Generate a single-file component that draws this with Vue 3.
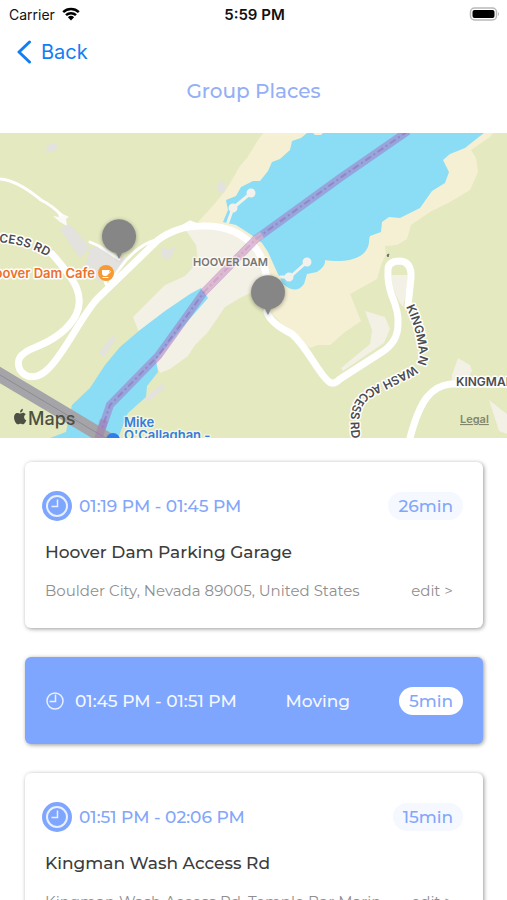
<script setup>
import { ref } from 'vue'

const stops = ref([
  {
    id: 1,
    moving: false,
    time: '01:19 PM - 01:45 PM',
    duration: '26min',
    name: 'Hoover Dam Parking Garage',
    address: 'Boulder City, Nevada 89005, United States'
  },
  { id: 2, moving: true, time: '01:45 PM - 01:51 PM', duration: '5min' },
  {
    id: 3,
    moving: false,
    time: '01:51 PM - 02:06 PM',
    duration: '15min',
    name: 'Kingman Wash Access Rd',
    address: 'Kingman Wash Access Rd, Temple Bar Marin...'
  }
])

const pins = [
  { x: 119, y: 236 },
  { x: 268, y: 292 }
]
</script>
<template>
  <div class="screen">
    <div class="status-bar">
      <div class="carrier">
        <span>Carrier</span>
        <svg class="wifi" viewBox="0 0 18 14">
          <path d="M1.2 5.2a11.3 11.3 0 0 1 15.6 0" />
          <path d="M4 8.2a7.2 7.2 0 0 1 10 0" />
          <path class="wifi-dot" d="M5.9 10.2a4.5 4.5 0 0 1 6.2 0L9 13.5z" />
        </svg>
      </div>
      <span class="clock">5:59 PM</span>
      <svg class="battery" viewBox="0 0 31 14">
        <rect x="1.5" y="1" width="26" height="12" rx="4" fill="#fff" stroke="#b9b9b9" stroke-width="1.5" />
        <rect x="3.5" y="3" width="22" height="8" rx="2" />
        <path d="M29 5q2 2 0 4z" fill="#b5b5b5" />
      </svg>
    </div>
    <header class="header">
      <button class="back-button">
        <svg class="chevron" viewBox="0 0 14 24"><path d="M12.5 2L2 12l10.5 10" /></svg>
        Back
      </button>
      <h1 class="title">Group Places</h1>
    </header>

    <svg class="map" viewBox="0 133 507 305" preserveAspectRatio="xMidYMid slice">
      <rect y="133" width="507" height="305" fill="#e4e9c0" />
      <!-- shore -->
      <path
        class="sand"
        d="M263 133L258 140 247 158 240 166 226 190 211 208 198 222 220 232 250 250 262 275 268 310 290 332 310 348 318 345 330 345 345 332 361 321 350 294 377 279 381 265 386 254 385 246 397 245 407 239 411 225 430 212 450 202 470 190 478 172 476 158 471 150 490 137 493 133z"
      />
      <path
        class="rock"
        d="M185 229L230 225 252 238 266 256 272 285 268 292 252 292 240 298 225 307 208 332 195 345 188 356 170 369 160 373 150 350 138 330 133 317 142 308 165 285 185 276 198 262 196 245z"
      />
      <!-- water -->
      <path
        class="water"
        d="M307 133L301 138 292 141 290 150 280 159 272 162 268 171 260 181 253 181 241 187 236 196 226 200 228 210 223 222 236 225 250 234 262 243 268 252 277 272 283 284Q296 295 304 284L307 274 317 272Q326 266 325 260C336 262 355 262 364 253 371 245 368 241 370 236L381 232 382 222 389 217 400 218 420 208 432 191 445 183 449 172 443 160 450 154 465 148 475 140 484 133z"
      />
      <path
        class="water"
        d="M201 288L208 298 180 330 156 360 158 372 147 386 146 397 128 413 118 438 50 438 66 432 72 405 90 388 105 365 120 347 140 330 165 311 190 294z"
      />
      <path class="sand" d="M313 133L323 133 321 135 315 135z" />
      <!-- lots and buildings -->
      <g fill="#e4e2df">
        <path d="M53 216L59 217 57 210 63 214 69 217 66 219 67 226 60 222z" fill="#fbfaf8" />
        <path d="M60 229L69 224 90 247 80 258z" />
        <path d="M90 249L100 245 112 257 128 258 117 270 99 283 86 264z" />
        <path d="M47 146l5-3 6 2-3 7-9-1zM217 185l4-4 4 3v7l-4 2-3-2zM161 247l8 3 8-4-5 8-3 5-7-2z" />
        <path d="M99 353l13-17 4 2-12 19zM145 398l18-15 2 4-17 15z" />
        <path d="M391 275q2 20 12 32l7-32z" class="rock" />
        <path d="M365 311L385 317 390 329 384 343 343 371 341 368 370 344 372 330z" class="rock" />
        <path d="M452 375l6-17 12 7 2 6-8 12h-12zM489 400l18 14v20l-8-3z" class="rock" />
      </g>
      <!-- roads -->
      <g class="road thin">
        <path d="M0 179Q17 180 41 200 53 206 61 215" />
        <path d="M90 242L99 246 119 259M106 288L120 268Q138 243 160 239L190 222 200 226M102 271l4 13" />
      </g>
      <g class="road">
        <path
          d="M52 254C76 281 85 296 76 315 67 332 51 341 36 347 18 354 16 361 20 370 28 381 40 377 48 369 65 353 80 318 97 299L158 240Q177 226 202 226C231 225 247 237 257 250 266 263 269 286 268 304"
        />
        <path d="M267 312Q270 323 292 334C307 347 317 371 328 381Q333 386 340 379L382 352Q398 342 398 324 399 313 392 296 387 282 388 270 388 261 400 261 412 262 411 278L408 306" />
        <path d="M410 438C420 400 431 386 451 384H507" />
      </g>
      <path d="M387 255l2-1-1 3z" stroke="#777" />
      <!-- piers -->
      <g class="pier">
        <path d="M228 222l5-14 18-15M280 277l10 0 17-15" />
        <circle cx="251" cy="193" r="3" />
        <circle cx="233" cy="208" r="3" />
        <circle cx="289" cy="277" r="3" />
        <circle cx="307" cy="262" r="3" />
      </g>
      <!-- state line -->
      <path class="border-line" d="M408 131L340 178 256 239 204 292 158 356 110 405 98 440" />
      <path class="border-dash" d="M408 131L340 178 256 239 204 292 158 356 110 405 98 440" />
      <path d="M262 235L256 239 204 292" fill="none" stroke="#f3c4cd" stroke-width="7" stroke-opacity=".5" />
      <!-- bridge -->
      <path d="M-5 372L114 443" stroke="#a5a4a9" stroke-width="14" />
      <path d="M-5 372L114 443" stroke="#8d8c92" stroke-width="1" />
      <path d="M104 420L98 440" stroke="#a279ae" stroke-width="8" stroke-opacity=".5" />

      <path id="access-path" d="M-10 242Q30 242 58 264" fill="none" />
      <path id="kingman-path" d="M406 307Q415 325 419 350C421 361 417 364 408 369L380 383C356 394 344 404 354 450" fill="none" />
      <g class="road-label">
        <text><textPath href="#access-path">CCESS RD</textPath></text>
        <text><textPath href="#kingman-path">KINGMAN WASH ACCESS RD</textPath></text>
        <text x="456" y="386">KINGMAN</text>
      </g>
      <text class="dam-label" x="193" y="266">HOOVER DAM</text>
      <text class="cafe-label" x="95" y="278" text-anchor="end">Hoover Dam Cafe</text>
      <circle cx="106" cy="273" r="8" fill="#f79a32" />
      <path d="M102 270h7v3q-1 3-3 3h-1q-3 0-3-3z" fill="#fff" />
      <path d="M109 270.5q3 .5 0 3M102.5 277.5h6" fill="none" stroke="#fff" />
      <circle cx="113" cy="440" r="7" fill="#2f7de8" />
      <text class="bridge-label" x="124" y="427">Mike</text>
      <text class="bridge-label" x="124" y="440">O'Callaghan -</text>

      <g v-for="pin in pins" :key="pin.x" class="pin">
        <path :d="`M${pin.x} ${pin.y + 23}l-3 -6a17 17 0 1 1 6 0z`" />
      </g>

      <g fill="#4d5042">
        <path
          d="M24.5 413.2C22.8 411.8 21 413.5 20 413.5S16.6 411.8 14.9 414.2C13 417 14.6 422 16.8 423.9 18.3 425 19 423.8 20.5 423.8S22.6 425 24 423.9Q25.5 422.7 26.3 420.3C23.4 418.8 23.6 415.5 25.8 414.2Q25.2 413.5 24.5 413.2zM20 412.6Q19.9 409.6 22.9 408.7 23 411.9 20 412.6z"
        />
        <text class="maps-logo" x="28" y="425">Maps</text>
      </g>
      <a href="#"><text class="legal" x="460" y="423">Legal</text></a>
    </svg>

    <main class="stop-list">
      <section v-for="stop in stops" :key="stop.id" class="card" :class="{ moving: stop.moving }">
        <div class="time-row">
          <svg class="clock-icon" viewBox="0 0 30 30">
            <circle v-if="!stop.moving" class="disc" cx="15" cy="15" r="15" />
            <circle class="ring" cx="15" cy="15" :r="stop.moving ? 8 : 10" />
            <path class="ring hands" d="M15.5 8.5V15.5H9.5" />
          </svg>
          <span class="time">{{ stop.time }}</span>
          <span v-if="stop.moving" class="moving-label">Moving</span>
          <span class="duration">{{ stop.duration }}</span>
        </div>
        <template v-if="!stop.moving">
          <h2 class="place-name">{{ stop.name }}</h2>
          <div class="address-row">
            <span class="address">{{ stop.address }}</span>
            <button class="edit-button">edit &gt;</button>
          </div>
        </template>
      </section>
    </main>
  </div>
</template>
<style>
body {
  margin: 0;
  background-color: #fff;
}
</style>
<style scoped>
.screen {
  height: 100vh;
  display: flex;
  flex-direction: column;
  overflow: hidden;
  font-family: Montserrat, Inter, 'Liberation Sans', sans-serif;
  background-color: #fff;
}
button {
  padding: 0;
  border: none;
  background: none;
  font-family: inherit;
  cursor: pointer;
}
.status-bar {
  display: grid;
  grid-template-columns: 1fr auto 1fr;
  align-items: center;
  height: 28px;
  padding: 0 7px 0 9px;
  flex-shrink: 0;
  font-family: Inter, sans-serif;
  font-size: 14px;
  color: #111;
}
.carrier {
  display: flex;
  align-items: center;
  gap: 7px;
}
.wifi {
  width: 18px;
  height: 14px;
  fill: none;
  stroke: #000;
  stroke-width: 2.5;
}
.wifi .wifi-dot {
  fill: #000;
  stroke: none;
}
.clock {
  font-size: 15px;
  font-weight: 600;
}
.battery {
  width: 31px;
  height: 14px;
  justify-self: end;
}
.header {
  height: 105px;
  flex-shrink: 0;
}
.back-button {
  display: flex;
  align-items: center;
  gap: 10px;
  height: 48px;
  padding-left: 17px;
  font-family: Inter, sans-serif;
  font-size: 20px;
  color: #127df5;
}
.chevron {
  width: 14px;
  height: 24px;
  fill: none;
  stroke: #127df5;
  stroke-width: 3;
  stroke-linecap: round;
  stroke-linejoin: round;
}
.title {
  margin: 0;
  font-size: 20px;
  line-height: 30px;
  font-weight: 500;
  text-align: center;
  color: #94aff5;
}
.map {
  display: block;
  width: 100%;
  height: 305px;
  flex-shrink: 0;
  font-family: Inter, sans-serif;
}
.sand {
  fill: #f5f0d3;
}
.rock {
  fill: #f3f0e5;
}
.water {
  fill: #8bdcf5;
}
.road,
.pier {
  fill: none;
  stroke: #fff;
  stroke-width: 7;
  stroke-linecap: round;
  stroke-linejoin: round;
}
.thin {
  stroke-width: 3;
}
.pier {
  stroke: #f3f1eb;
  stroke-width: 3;
}
.pier circle {
  fill: #f3f1eb;
}
.border-line {
  fill: none;
  stroke: #a279c8;
  stroke-width: 8;
  stroke-opacity: 0.55;
}
.border-dash {
  fill: none;
  stroke: #9470b5;
  stroke-width: 2;
  stroke-opacity: 0.6;
  stroke-dasharray: 7 3 2 3;
}
.road-label,
.dam-label,
.cafe-label,
.bridge-label {
  font-size: 11px;
  font-weight: 600;
  fill: #4c4c50;
  stroke: #fff;
  stroke-width: 3;
  stroke-linejoin: round;
  paint-order: stroke;
}
.road-label {
  font-size: 12px;
}
.dam-label {
  fill: #77756f;
  stroke-opacity: 0.6;
}
.cafe-label {
  font-size: 13px;
  fill: #ed702d;
}
.bridge-label {
  font-size: 13px;
  fill: #367ddd;
  stroke-opacity: 0.5;
}
.pin {
  fill: #868686;
  filter: drop-shadow(0 1px 2px rgba(0, 0, 0, 0.35));
}
.maps-logo {
  font-size: 18px;
  font-weight: 500;
}
.legal {
  font-size: 11px;
  font-weight: 600;
  fill: #82876f;
  text-decoration: underline;
}
.stop-list {
  display: flex;
  flex-direction: column;
  gap: 29px;
  flex: 1;
  min-height: 0;
  padding: 24px 24px 24px 25px;
  overflow-y: auto;
  scrollbar-width: none;
}
.card {
  flex-shrink: 0;
  box-sizing: border-box;
  min-height: 166px;
  padding: 28px 20px 24px;
  border-radius: 6px;
  background-color: #fff;
  box-shadow: 1px 1px 4px rgba(0, 0, 0, 0.4);
}
.card.moving {
  min-height: 87px;
  background-color: #7fa6ff;
}
.time-row {
  display: flex;
  align-items: center;
  height: 32px;
  font-size: 17px;
  font-weight: 500;
  color: #82a6fa;
}
.clock-icon {
  width: 30px;
  height: 30px;
  margin: 0 7px 0 -3px;
}
.disc {
  fill: #7fa6ff;
}
.ring {
  fill: none;
  stroke: #e9f0ff;
  stroke-width: 2;
}
.hands,
.moving .ring {
  stroke-width: 1.5;
}
.moving .time-row {
  color: #f5f8ff;
}
.moving .clock-icon {
  margin: 0 5px 0 -5px;
}
.moving-label {
  margin-left: auto;
}
.duration {
  margin-left: auto;
  padding: 0 10px;
  border-radius: 14px;
  line-height: 28px;
  background-color: #f5f8ff;
}
.moving .duration {
  background-color: #fff;
  color: #82a6fa;
}
.place-name {
  margin: 15px 0 14px;
  font-size: 17px;
  line-height: 30px;
  font-weight: 500;
  color: #3c3c3c;
}
.address-row {
  display: flex;
  align-items: center;
  justify-content: space-between;
  padding-right: 10px;
  font-size: 15px;
  line-height: 20px;
  color: #8f8f8f;
}
.address {
  overflow: hidden;
  text-overflow: ellipsis;
  white-space: nowrap;
}
.edit-button {
  flex-shrink: 0;
  font-size: 15px;
  line-height: 20px;
  color: #8f8f8f;
}
</style>
